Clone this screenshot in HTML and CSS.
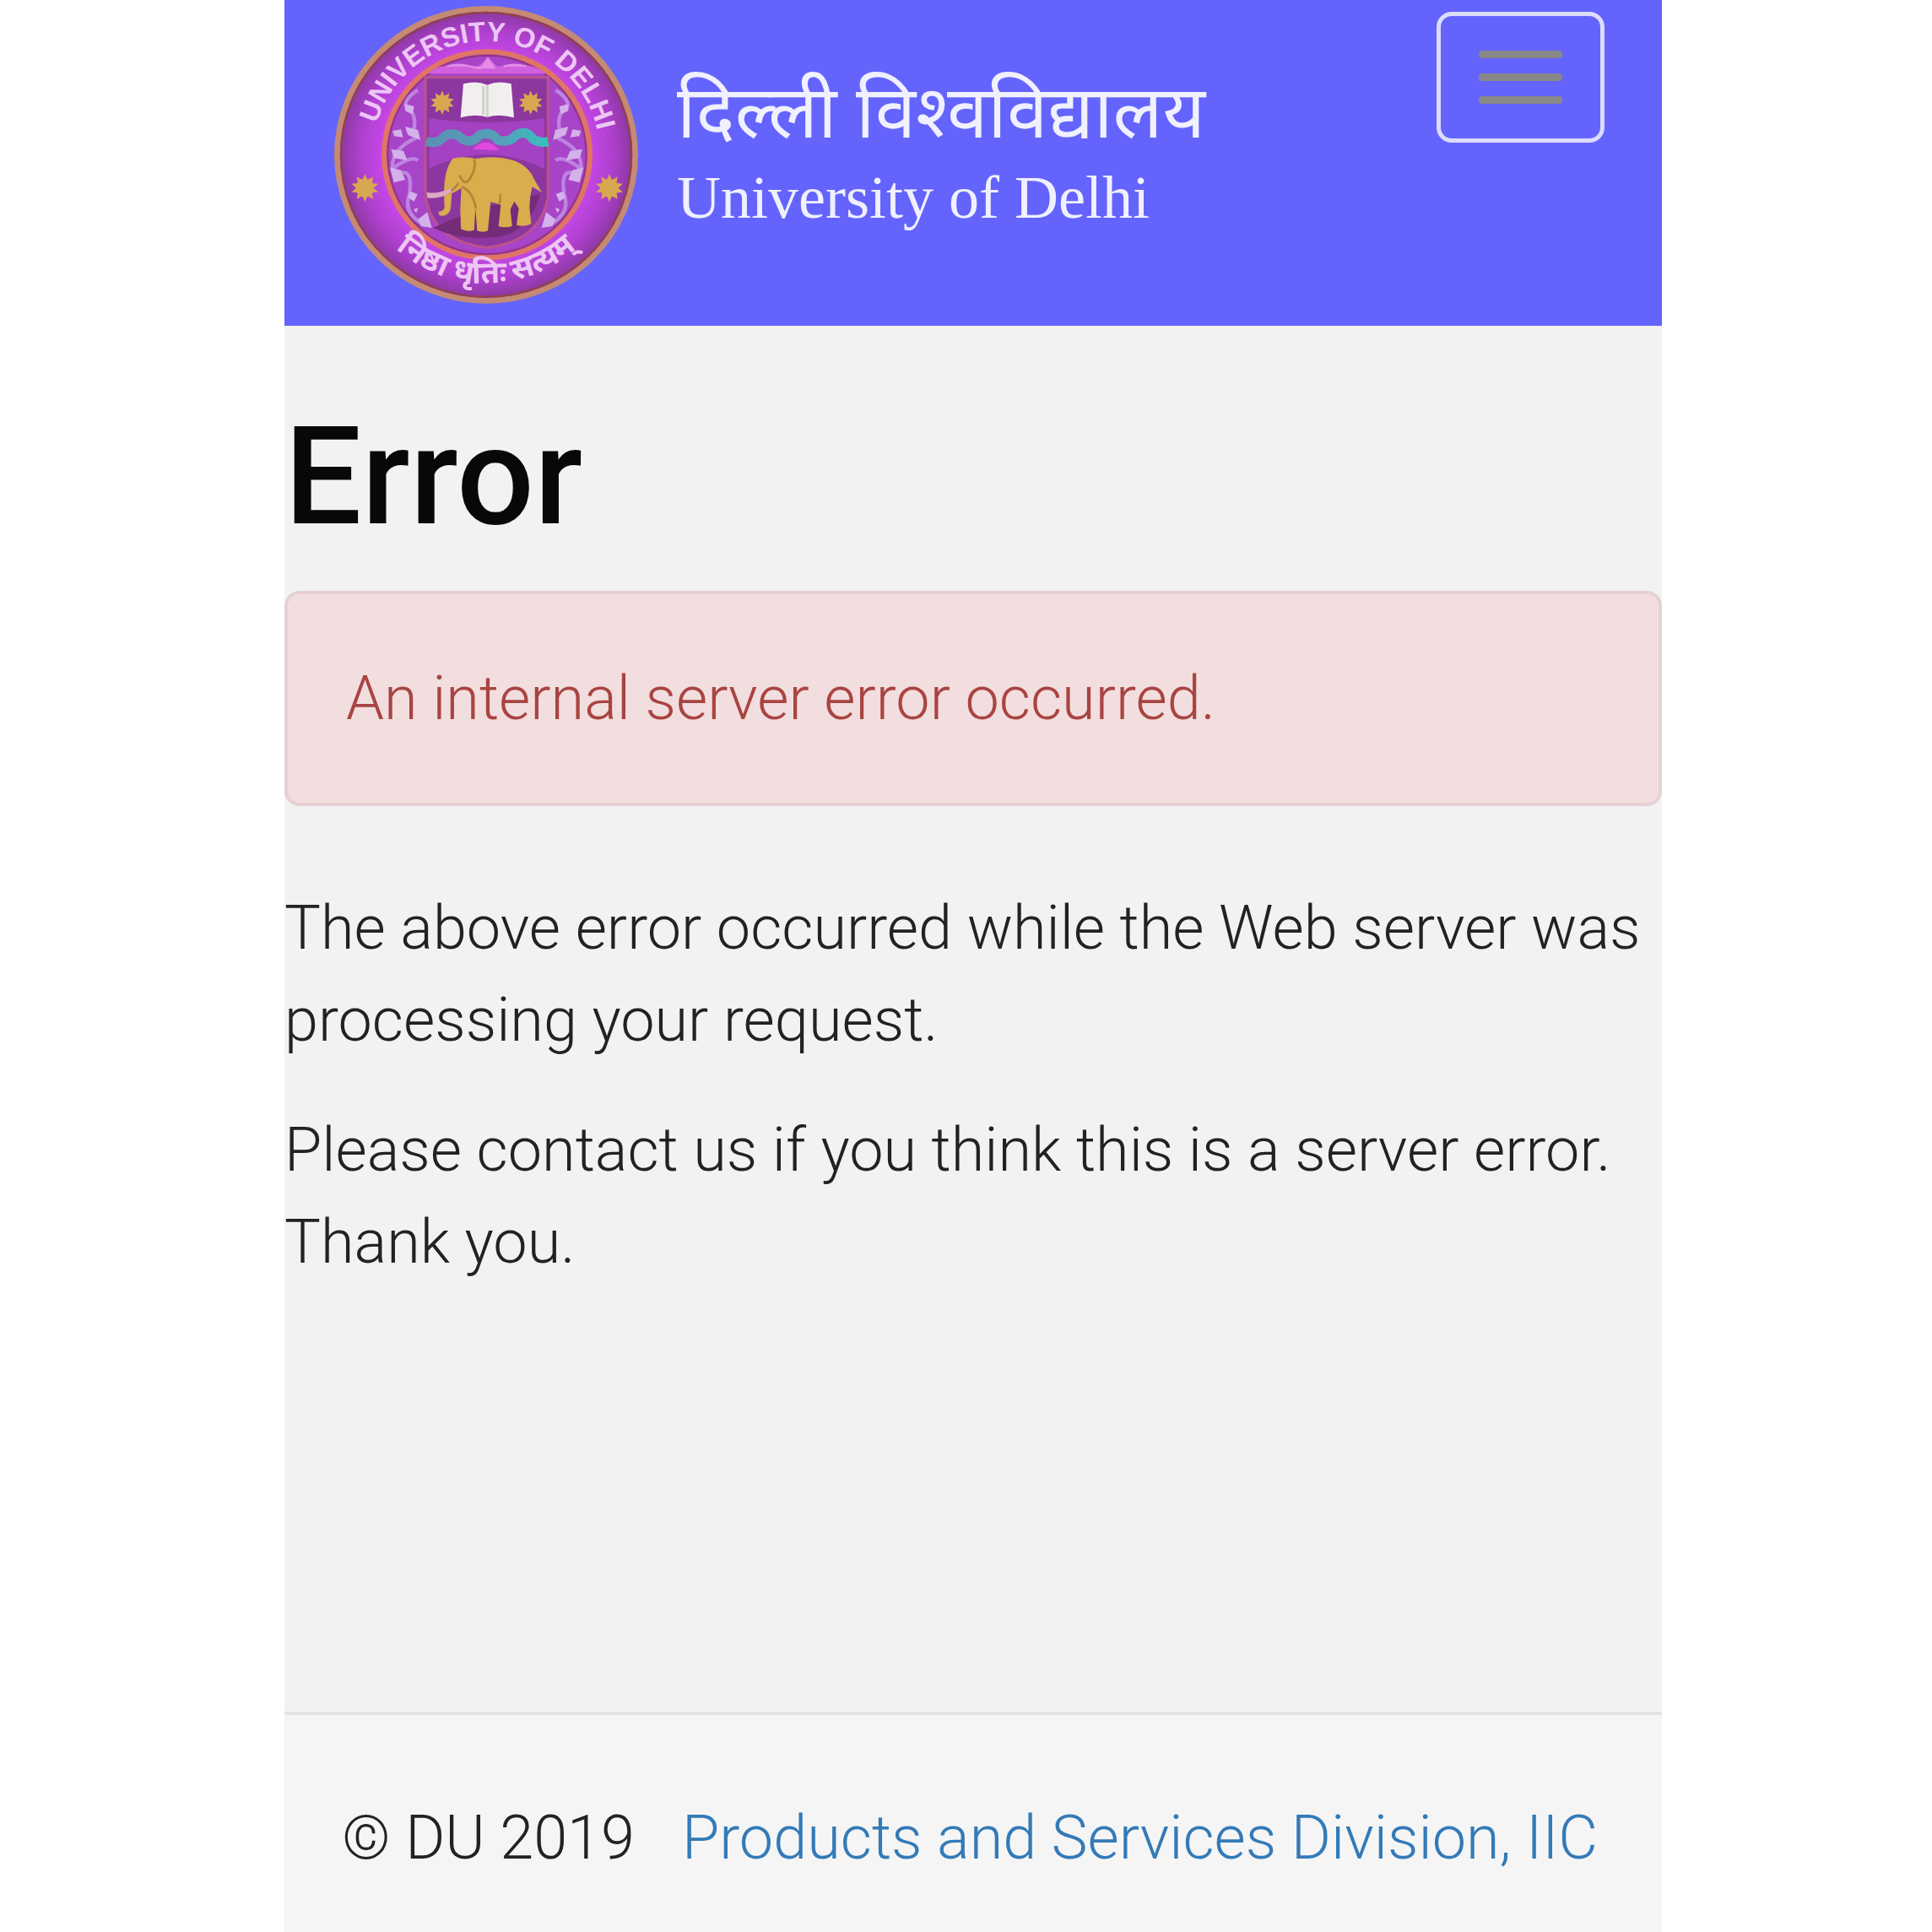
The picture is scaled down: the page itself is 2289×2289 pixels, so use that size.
FILE: index.html
```html
<!DOCTYPE html>
<html lang="en">
<head>
    <meta charset="UTF-8">
    <meta name="viewport" content="width=device-width, initial-scale=1.0">
    <title>Error - University of Delhi</title>
    <link rel="stylesheet" href="styles.css">
</head>
<body>
    <div class="wrap">
        <header class="navbar">
            <a class="brand" href="#">
                <svg class="seal" viewBox="0 0 1200 1140" role="img" aria-label="University of Delhi seal">
                    <defs>
                        <radialGradient id="ring" cx="0.5" cy="0.5" r="0.5">
                            <stop offset="0.68" stop-color="#c848ea"/>
                            <stop offset="0.84" stop-color="#b040d0"/>
                            <stop offset="1" stop-color="#86389c"/>
                        </radialGradient>
                        <linearGradient id="wave" x1="0" x2="1">
                            <stop offset="0" stop-color="#5c8fb4"/>
                            <stop offset="0.6" stop-color="#55a0b8"/>
                            <stop offset="1" stop-color="#38c0c0"/>
                        </linearGradient>
                        <path id="arc-top" d="M184 550 A404 404 0 0 1 992 550"/>
                        <path id="arc-bottom" d="M120 550 A468 456 0 0 0 1056 550"/>
                        <g id="flower">
                            <path d="M0 -50 L9 -28 29 -40 25 -17 48 -15 31 0 48 15 25 17 29 40 9 28 0 50 -9 28 -29 40 -25 17 -48 15 -31 0 -48 -15 -25 -17 -29 -40 -9 -28z"/>
                            <circle r="32"/>
                        </g>
                        <g id="vine">
                            <path d="M345 320 Q270 370 325 400 Q340 430 330 460 M340 490 Q250 530 255 600 Q320 550 345 570 M270 620 Q330 590 315 690 Q290 760 370 800" fill="none" stroke="#bd84e0" stroke-width="13"/>
                            <path d="M300 370l32 8-6 28-26-12zM300 450l46 12 8 36-44-18zM255 465l30-5 8 28-32-4zM250 530l44 6 14 34-48-8zM246 595l40 10 14 34-40 10zM318 680l26 10-12 26-22-14zM345 780l34-26 16 56-38-6zM330 745l16-8-6 20z" fill="#d3b1ea"/>
                        </g>
                    </defs>

                    <!-- outer ring -->
                    <ellipse cx="588" cy="550" rx="530" ry="519" fill="url(#ring)" stroke="#c48a74" stroke-width="20"/>
                    <ellipse cx="588" cy="550" rx="516" ry="505" fill="none" stroke="#93404c" stroke-width="7"/>
                    <!-- inner ring -->
                    <ellipse cx="591" cy="550" rx="366" ry="366" fill="#a844c8" stroke="#e07565" stroke-width="18"/>
                    <ellipse cx="591" cy="550" rx="353" ry="353" fill="none" stroke="#93357f" stroke-width="6"/>

                    <!-- vines around the shield -->
                    <use href="#vine"/>
                    <use href="#vine" transform="translate(1180 0) scale(-1 1)"/>

                    <!-- shield -->
                    <path d="M372 275 H808 V700 Q780 860 590 880 Q400 860 372 700z" fill="#8b379f" stroke="#b95191" stroke-width="10"/>
                    <path d="M380 262 Q420 225 500 232 L560 236 594 205 628 236 680 230 Q760 225 800 262z" fill="#d060dd"/>
                    <path d="M450 236 q40 -12 80 0 t50 0 M572 240 l22 -32 22 32z M650 236 q40 -12 80 0" fill="#f08ae8" stroke="#e18ce8" stroke-width="7"/>
                    <path d="M385 420 Q590 450 795 420 V600 Q590 500 385 600z" fill="#a541c3"/>
                    <path d="M540 530 Q590 480 635 535z" fill="#e548dc"/>
                    <path d="M375 502 Q415 515 440 484 Q475 465 500 492 Q535 515 565 480 Q605 465 630 498 Q670 510 695 480 Q730 460 755 495 Q780 510 808 503" fill="none" stroke="url(#wave)" stroke-width="33"/>

                    <!-- book -->
                    <path d="M507 298 Q555 286 592 302 Q630 286 677 298 L687 418 Q635 404 592 416 Q545 404 497 418z" fill="#f2eef0"/>
                    <path d="M592 302 V414 M578 306 V408" stroke="#ccd2c8" stroke-width="9"/>

                    <g fill="#d8a850">
                        <use href="#flower" transform="translate(432 365) scale(0.86)"/>
                        <use href="#flower" transform="translate(746 365) scale(0.86)"/>
                        <use href="#flower" transform="translate(157 668)"/>
                        <use href="#flower" transform="translate(1026 668)"/>
                    </g>

                    <!-- elephant -->
                    <path d="M400 810 Q560 730 780 690 Q740 820 640 840 Q500 860 400 810z" fill="#742c79"/>
                    <path d="M470 563 Q510 554 550 564 Q620 550 692 572 Q742 594 758 636 L786 684 752 664 Q742 700 742 736 L748 796 Q725 808 696 800 L704 740 688 716 674 744 680 804 Q652 812 632 804 L640 728 Q620 722 604 718 L594 820 Q576 828 556 820 L550 740 545 818 Q520 826 498 814 L496 740 Q498 700 500 668 Q480 682 466 686 L462 740 Q454 772 422 766 L418 752 Q438 752 440 736 L438 692 Q438 600 470 563z" fill="#d9ac4c"/>
                    <path d="M545 566 Q556 600 524 644 Q506 656 494 622 M502 664 Q540 680 552 742 M638 690 Q640 716 632 726 M446 690 Q480 670 490 650" fill="none" stroke="#b98235" stroke-width="8"/>
                    <path d="M376 684 Q420 690 462 668 L464 682 Q430 708 380 704z" fill="#dcaac4"/>

                    <text class="seal-name"><textPath href="#arc-top" startOffset="51%" text-anchor="middle">UNIVERSITY OF DELHI</textPath></text>
                    <text class="seal-motto"><textPath href="#arc-bottom" startOffset="50%" text-anchor="middle">निष्ठा धृतिः सत्यम्</textPath></text>
                </svg>
                <span class="brand-text">
                    <span class="brand-hi" lang="hi">दिल्ली विश्&zwj;वविद्यालय</span>
                    <span class="brand-en">University of Delhi</span>
                </span>
            </a>
            <button class="navbar-toggle" type="button" aria-label="Toggle navigation">
                <span class="icon-bar"></span>
                <span class="icon-bar"></span>
                <span class="icon-bar"></span>
            </button>
        </header>

        <main class="site-error">
            <h1>Error</h1>
            <div class="alert" role="alert">An internal server error occurred.</div>
            <p>The above error occurred while the Web server was processing your request.</p>
            <p>Please contact us if you think this is a server error. Thank you.</p>
        </main>

        <footer class="footer">
            <span>© DU 2019</span>
            <a href="#">Products and Services Division, IIC</a>
        </footer>
    </div>
</body>
</html>
```
FILE: styles.css
```css
:root {
    --nav: #6464fc;
    --bg: #f2f2f2;
    --bg-footer: #f5f5f5;
    --fg: #222;
    --link: #337ab7;
    --danger: #a94442;
    --danger-bg: #f2dede;
    --danger-border: #e6d0d4;
}

* {
    margin: 0;
    padding: 0;
    box-sizing: border-box;
}

body {
    padding: 0 320px 0 337px;
    background-color: #fff;
    color: var(--fg);
    font-family: Roboto, "Liberation Sans", sans-serif;
    font-size: 72px;
    font-weight: 300;
    line-height: 109px;
}

.wrap {
    display: flex;
    flex-direction: column;
    min-height: 100vh;
    background-color: var(--bg);
}

.navbar {
    display: flex;
    justify-content: space-between;
    align-items: flex-start;
    min-height: 386px;
    padding: 0 68px 0 43px;
    background-color: var(--nav);
}

.brand {
    display: flex;
    gap: 22px;
    color: #f0f0ff;
    text-decoration: none;
}

.seal {
    width: 400px;
    height: 380px;
    flex-shrink: 0;
}

.seal-name {
    fill: #edc6f5;
    font-family: "Liberation Sans", Arial, sans-serif;
    font-size: 98px;
    font-weight: 700;
}

.seal-motto {
    fill: #edc6f5;
    font-family: "Noto Sans Devanagari", "Noto Sans", sans-serif;
    font-size: 108px;
    font-weight: 700;
}

.brand-text {
    display: flex;
    flex-direction: column;
    padding-top: 82px;
    white-space: nowrap;
}

.brand-hi {
    font-family: "Noto Sans Devanagari", "Noto Sans", sans-serif;
    font-size: 87px;
    font-weight: 400;
    line-height: 120px;
}

.brand-en {
    font-family: "Liberation Serif", "Times New Roman", serif;
    font-size: 72px;
    font-weight: 400;
    line-height: 64px;
}

.navbar-toggle {
    display: flex;
    flex-direction: column;
    justify-content: center;
    align-items: center;
    gap: 18px;
    width: 199px;
    height: 155px;
    margin-top: 14px;
    border: 5px solid #dcdcff;
    border-radius: 18px;
    background: none;
    cursor: pointer;
}

.icon-bar {
    width: 99px;
    height: 9px;
    border-radius: 4px;
    background-color: #888;
}

.site-error {
    flex: 1;
}

h1 {
    margin: 90px 0 46px;
    color: #080808;
    font-size: 162px;
    font-weight: 500;
    line-height: 178px;
}

.alert {
    margin-bottom: 90px;
    padding: 69px;
    border: 4px solid var(--danger-border);
    border-radius: 18px;
    background-color: var(--danger-bg);
    color: var(--danger);
}

p {
    margin-bottom: 45px;
}

.footer {
    display: flex;
    gap: 56px;
    padding: 91px 68px 57px;
    border-top: 4px solid #e3e3e3;
    background-color: var(--bg-footer);
}

.footer a {
    color: var(--link);
    text-decoration: none;
}
```
